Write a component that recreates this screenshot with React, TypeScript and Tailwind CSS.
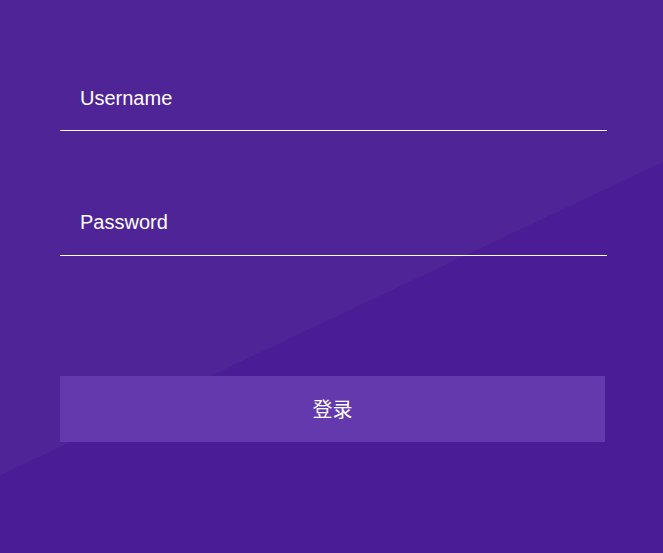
export default function App() {
  return (
    <div className="h-screen w-full overflow-hidden bg-[linear-gradient(154.7deg,#4f2496_54.85%,#4a1d96_54.85%)] font-['Liberation_Sans','Noto_Sans_CJK_SC',sans-serif]">
      <form className="pt-[66px] pl-[60px] w-[607px]">
        <input
          type="text"
          placeholder="Username"
          className="block w-full h-[65px] bg-transparent border-b border-white pl-5 text-[20px] text-white placeholder:text-white outline-none"
        />
        <input
          type="password"
          placeholder="Password"
          className="block w-full h-[67px] mt-[58px] bg-transparent border-b border-white pl-5 text-[20px] text-white placeholder:text-white outline-none"
        />
        <button
          type="button"
          className="block w-[545px] h-[66px] mt-[120px] bg-[#6439ae] text-white text-[20px] font-['Noto_Sans_CJK_SC',sans-serif]"
        >
          登录
        </button>
      </form>
    </div>
  );
}
